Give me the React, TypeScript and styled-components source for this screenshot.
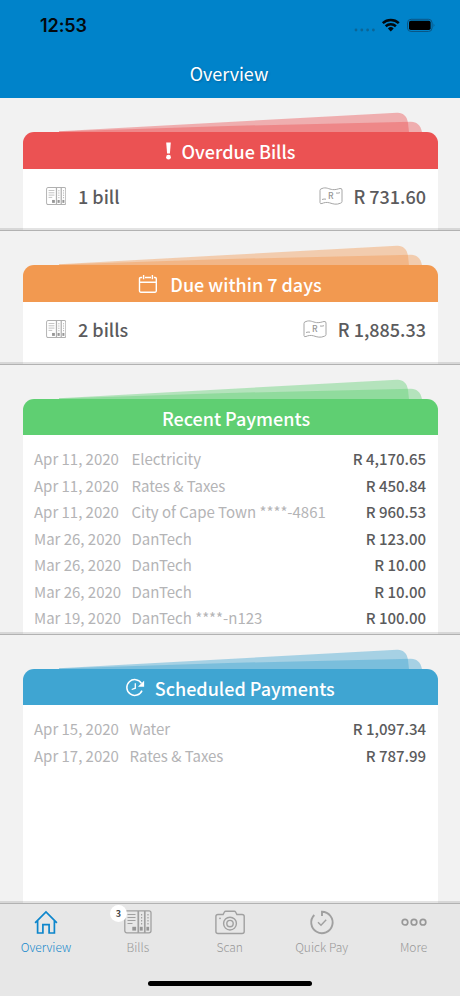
import React from "react";
import styled, { createGlobalStyle } from "styled-components";

const GlobalStyle = createGlobalStyle`
  * { box-sizing: border-box; }
  html, body { margin: 0; padding: 0; }
  body {
    width: 460px;
    height: 996px;
    overflow: hidden;
    background: #f2f2f2;
    font-family: "Noto Sans CJK SC", "Noto Sans", sans-serif;
  }
`;

const Screen = styled.div`
  width: 460px;
  height: 996px;
  display: flex;
  flex-direction: column;
  overflow: hidden;
`;

const Header = styled.header`
  height: 98px;
  flex: none;
  background: #0083ca;
  display: flex;
  flex-direction: column;
`;

const StatusBar = styled.div`
  height: 50px;
  padding: 0 22px 0 40px;
  display: flex;
  align-items: center;
  justify-content: space-between;
`;

const Clock = styled.span`
  font: 600 18px/22px Inter, sans-serif;
  letter-spacing: -0.1px;
  color: #04090d;
  padding-top: 2px;
`;

const Title = styled.h1`
  margin: 0;
  height: 48px;
  line-height: 46px;
  text-align: center;
  color: #fff;
  font-size: 18px;
  font-weight: 400;
  letter-spacing: -0.05px;
  text-indent: -2px;
  text-shadow: 1px 1px 2px rgba(0, 50, 90, 0.35);
`;

const Section = styled.section<{ $height: number }>`
  height: ${(p) => p.$height}px;
  flex: none;
  padding: 14px 22.5px 0 22.5px;
  display: flex;
  flex-direction: column;
  border-bottom: 1px solid #b2b2b2;
  position: relative;

  &::after {
    content: "";
    position: absolute;
    left: 0;
    right: 0;
    bottom: 0;
    height: 2px;
    background: rgba(0, 0, 0, 0.11);
  }
`;

const Sheets = styled.svg`
  display: block;
  flex: none;
  width: 415px;
  height: 20px;
`;

const CardHeader = styled.div<{ $color: string; $gap: number }>`
  height: 36.6px;
  flex: none;
  border-radius: 11px 11px 0 0;
  background: ${(p) => p.$color};
  display: flex;
  align-items: center;
  justify-content: center;
  gap: ${(p) => p.$gap}px;
  padding-top: 2px;
`;

const CardTitle = styled.h2`
  margin: 0;
  font-size: 18px;
  line-height: 38px;
  font-weight: 500;
  color: #fff;
  white-space: nowrap;
`;

const CardBody = styled.div<{ $top: number }>`
  flex: 1;
  min-height: 0;
  overflow: hidden;
  background: #fff;
  padding: ${(p) => p.$top}px 11.5px 0 11.5px;
`;

const Summary = styled.div`
  height: 54.5px;
  display: flex;
  align-items: center;
  padding-left: 11.5px;
  color: #5b5b5d;
  font-size: 18px;
  font-weight: 500;
  white-space: nowrap;

  svg {
    margin-top: 1px;
  }
`;

const Count = styled.span`
  margin-left: 12px;
  flex: 1;
`;

const Total = styled.span`
  margin-left: 10.5px;
`;

const Payment = styled.div<{ $dateWidth: number }>`
  height: 26.5px;
  line-height: 26.5px;
  display: grid;
  grid-template-columns: ${(p) => p.$dateWidth}px 1fr auto;
  color: #b4b4b6;
  font-size: 15px;
  font-weight: 400;
  letter-spacing: -0.02px;
  white-space: nowrap;
`;

const Amount = styled.span`
  color: #5b5b5d;
  font-weight: 500;
  font-size: 15px;
`;

const TabBar = styled.nav`
  flex: 1;
  background: #e7e7e7;
  display: flex;
  flex-direction: column;
  align-items: center;
`;

const Tabs = styled.div`
  width: 460px;
  display: grid;
  grid-template-columns: repeat(5, 91.9px);
  height: 80px;
`;

const Tab = styled.div<{ $active?: boolean }>`
  display: flex;
  flex-direction: column;
  align-items: center;
  padding-top: 4px;
  color: ${(p) => (p.$active ? "#1688cc" : "#989898")};
  position: relative;
  font-size: 12px;
  line-height: 22px;
  font-weight: 300;
`;

const IconSlot = styled.span`
  height: 28px;
  display: flex;
  align-items: center;
`;

const Badge = styled.span`
  position: absolute;
  left: 18px;
  top: 1px;
  width: 17px;
  height: 17px;
  border-radius: 50%;
  background: #fff;
  color: #444;
  font: 700 9px/17px "Noto Sans CJK SC", sans-serif;
  text-align: center;
`;

const HomeIndicator = styled.div`
  width: 164px;
  height: 5.5px;
  border-radius: 3px;
  background: #000;
  margin-top: -3px;
`;

function StatusIcons() {
  return (
    <svg width="90" height="20" viewBox="0 0 90 20">
      <g fill="#0b6596">
        <circle cx="8" cy="15" r="1.4" />
        <circle cx="13.8" cy="15" r="1.4" />
        <circle cx="19.6" cy="15" r="1.4" />
        <circle cx="25.4" cy="15" r="1.4" />
      </g>
      <g fill="none" stroke="#03080c" strokeWidth="2.5">
        <path d="M34.8 8.1a11.8 11.8 0 0 1 16 0" />
        <path d="M37.7 11.2a7.6 7.6 0 0 1 10.2 0" />
      </g>
      <path d="M39.9 13.5a4.2 4.2 0 0 1 5.8 0L42.8 16.4z" fill="#03080c" />
      <rect x="59.5" y="4.3" width="24.6" height="12.2" rx="3.6" fill="none" stroke="#0a5685" />
      <rect x="61" y="5.8" width="21.6" height="9.2" rx="1.8" fill="#000" />
      <path d="M85.6 8.3q1.8 1.9 0 4z" fill="#0a5685" />
    </svg>
  );
}

function BillsIcon({ size }: { size: "small" | "large" }) {
  const large = size === "large";
  return (
    <svg
      width={large ? 28 : 20.5}
      height={large ? 24 : 18.5}
      viewBox="0 0 28 24"
      preserveAspectRatio="none"
      fill="none"
      stroke={large ? "#a0a0a0" : "#b0b0b0"}
      strokeWidth="1.3"
    >
      <rect x="0.8" y="0.8" width="26.2" height="22" rx="2" />
      <path d="M14.3 1v22M20.8 1v22" strokeWidth="1.7" />
      <path d="M3.5 4.5h8M3.5 7.5h8M3.5 10.5h8M3.5 13.5h5" strokeWidth="1" />
      <path d="M17.6 4v12M24 4v12" strokeWidth="1.2" strokeDasharray="1.6 1.4" />
      <g fill="#969696" stroke="none">
        <rect x="8.3" y="16.8" width="3.8" height="3.8" />
        <rect x="15.8" y="16.8" width="2.9" height="3.8" />
        <rect x="22.4" y="16.8" width="2.7" height="3.8" />
      </g>
    </svg>
  );
}

const NoteLetter = styled.text`
  font: 500 8.5px "Noto Sans CJK SC", sans-serif;
  fill: #969696;
`;

function NoteIcon() {
  return (
    <svg width="24" height="19" viewBox="0 0 24 19" fill="none" stroke="#a6a6a6" strokeWidth="1">
      <path d="M1 3.5Q1 1.8 3 1.5C7-.2 10 2.2 13.5 2.6C17 3 19 1.8 21 1.5Q23 1.2 23 3V14.5Q23 15.8 21.5 16.2C17.5 18 14 17 10.5 15.8C7.5 15 5 15.6 3 16.5Q1 17.2 1 15.5z" />
      <path d="M3 12.5q2-.8 4-.3M17 6q2 .4 4-.3" />
      <NoteLetter x="8.9" y="12.4" stroke="none">R</NoteLetter>
    </svg>
  );
}

function ExclaimIcon() {
  return (
    <svg width="7" height="18" viewBox="0 0 7 18" fill="#fff">
      <path d="M1.2.6H5.8L4.9 11.5H2.1z" />
      <circle cx="3.5" cy="15.2" r="2.4" />
    </svg>
  );
}

function CalendarIcon() {
  return (
    <svg width="20" height="20" viewBox="0 0 20 20" fill="none" stroke="#fff" strokeWidth="1.4">
      <path d="M4.2 3.5H2.7Q1.5 3.5 1.5 4.7V17.1Q1.5 18.2 2.7 18.2H17.1Q18.3 18.2 18.3 17.1V4.7Q18.3 3.5 17.1 3.5H15.9M7 3.5h6M1.5 8.2h16.8" />
      <path d="M5.6 1v4.2M14.4 1v4.2" />
    </svg>
  );
}

function ClockIcon() {
  return (
    <svg width="20" height="20" viewBox="0 0 20 20" fill="none" stroke="#fff" strokeWidth="1.5">
      <path d="M16.5 5.4A7.9 7.9 0 1 0 17 12.6" />
      <path d="M10.3 5.2V10.2L6.7 11.5" strokeWidth="1.3" />
      <path d="M19.1 2.8v6h-6.2z" fill="#fff" stroke="none" />
    </svg>
  );
}

function HomeIcon() {
  return (
    <svg width="26" height="28" viewBox="0 0 26 28" fill="none" stroke="#0d86cc" strokeWidth="1.7">
      <path d="M2.1 14.9 13 3.9 23.9 14.9M4.6 12.7V25H9.9V16.6H16.1V25H21.4V12.7" />
    </svg>
  );
}

function CameraIcon() {
  return (
    <svg width="30" height="28" viewBox="0 0 30 28" fill="none" stroke="#a0a0a0" strokeWidth="1.4">
      <path d="M3 6.5H8.1L9.4 4Q9.8 3.2 10.8 3.2H19.2Q20.2 3.2 20.6 4L21.9 6.5H27Q29.2 6.5 29.2 8.5V23.5Q29.2 25.5 27 25.5H3Q.9 25.5.9 23.5V8.5Q.9 6.5 3 6.5z" />
      <circle cx="15" cy="15.6" r="6.4" />
      <circle cx="15" cy="15.6" r="3.2" />
      <circle cx="5" cy="10.3" r="0.9" fill="#a0a0a0" stroke="none" />
    </svg>
  );
}

function QuickPayIcon() {
  return (
    <svg width="26" height="28" viewBox="0 0 26 28" fill="none" stroke="#a0a0a0" strokeWidth="1.9">
      <path d="M13 8V3.8A10.7 10.7 0 1 1 5.3 7" />
      <path d="M9 14.3 12 17.3 17.2 11.8" strokeWidth="1.4" />
    </svg>
  );
}

function MoreIcon() {
  return (
    <svg width="26" height="28" viewBox="0 0 26 28" fill="none" stroke="#989898" strokeWidth="1.7">
      <circle cx="4" cy="14.2" r="2.8" />
      <circle cx="13" cy="14.2" r="2.8" />
      <circle cx="22" cy="14.2" r="2.8" />
    </svg>
  );
}

function CardTop(p: { color: string; title: string; gap?: number; icon?: React.ReactNode }) {
  return (
    <>
      <Sheets viewBox="0 0 415 20" fill={p.color} fillOpacity="0.42">
        <path d="M36 19.2 374 .7C380 .4 384 4 385 11L386 20H36z" />
        <path d="M36 19.6 205 14 388 9.8C394 9.8 397.5 13.5 399 20H36z" />
      </Sheets>
      <CardHeader $color={p.color} $gap={p.gap ?? 10}>
        {p.icon ?? <span />}
        <CardTitle>{p.title}</CardTitle>
      </CardHeader>
    </>
  );
}

function SummaryRow({ count, total }: { count: string; total: string }) {
  return (
    <Summary>
      <BillsIcon size="small" />
      <Count>{count}</Count>
      <NoteIcon />
      <Total>{total}</Total>
    </Summary>
  );
}

const recent = [
  ["Apr 11, 2020", "Electricity", "R 4,170.65"],
  ["Apr 11, 2020", "Rates & Taxes", "R 450.84"],
  ["Apr 11, 2020", "City of Cape Town ****-4861", "R 960.53"],
  ["Mar 26, 2020", "DanTech", "R 123.00"],
  ["Mar 26, 2020", "DanTech", "R 10.00"],
  ["Mar 26, 2020", "DanTech", "R 10.00"],
  ["Mar 19, 2020", "DanTech ****-n123", "R 100.00"],
];

const scheduled = [
  ["Apr 15, 2020", "Water", "R 1,097.34"],
  ["Apr 17, 2020", "Rates & Taxes", "R 787.99"],
];

function PaymentList({ rows, dateWidth }: { rows: string[][]; dateWidth: number }) {
  return (
    <>
      {rows.map(([date, name, amount], i) => (
        <Payment key={i} $dateWidth={dateWidth}>
          <span>{date}</span>
          <span>{name}</span>
          <Amount>{amount}</Amount>
        </Payment>
      ))}
    </>
  );
}

const tabs = [
  { label: "Overview", icon: <HomeIcon />, active: true },
  { label: "Bills", icon: <BillsIcon size="large" />, badge: 3 },
  { label: "Scan", icon: <CameraIcon /> },
  { label: "Quick Pay", icon: <QuickPayIcon /> },
  { label: "More", icon: <MoreIcon /> },
];

export default function App() {
  return (
    <Screen>
      <GlobalStyle />
      <Header>
        <StatusBar>
          <Clock>12:53</Clock>
          <StatusIcons />
        </StatusBar>
        <Title>Overview</Title>
      </Header>
      <Section $height={133}>
        <CardTop color="#eb5253" title="Overdue Bills" icon={<ExclaimIcon />} />
        <CardBody $top={0}>
          <SummaryRow count="1 bill" total="R 731.60" />
        </CardBody>
      </Section>
      <Section $height={133.5}>
        <CardTop color="#f29950" title="Due within 7 days" icon={<CalendarIcon />} gap={12} />
        <CardBody $top={0}>
          <SummaryRow count="2 bills" total="R 1,885.33" />
        </CardBody>
      </Section>
      <Section $height={270}>
        <CardTop color="#5fcf72" title="Recent Payments" gap={12} />
        <CardBody $top={11}>
          <PaymentList rows={recent} dateWidth={97.5} />
        </CardBody>
      </Section>
      <Section $height={269}>
        <CardTop color="#3fa5d2" title="Scheduled Payments" icon={<ClockIcon />} gap={9.5} />
        <CardBody $top={11}>
          <PaymentList rows={scheduled} dateWidth={95.5} />
        </CardBody>
      </Section>
      <TabBar>
        <Tabs>
          {tabs.map((t) => (
            <Tab key={t.label} $active={t.active}>
              <IconSlot>{t.icon}</IconSlot>
              {t.label}
              {t.badge && <Badge>{t.badge}</Badge>}
            </Tab>
          ))}
        </Tabs>
        <HomeIndicator />
      </TabBar>
    </Screen>
  );
}
